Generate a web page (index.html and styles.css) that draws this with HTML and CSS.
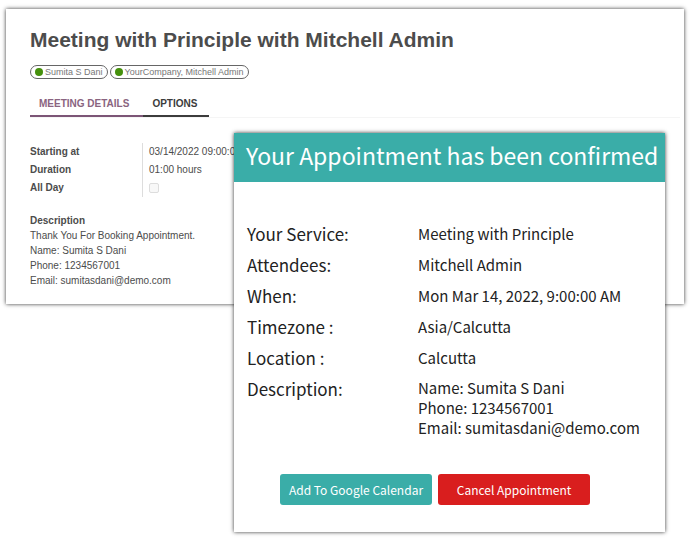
FILE: index.html
```html
<!DOCTYPE html>
<html lang="en">
<head>
    <meta charset="utf-8">
    <title>Meeting with Principle with Mitchell Admin</title>
    <link rel="stylesheet" href="styles.css">
</head>
<body>
    <main class="meeting">
        <h1>Meeting with Principle with Mitchell Admin</h1>
        <div class="attendees">
            <span class="tag"><span class="dot"></span>Sumita S Dani</span>
            <span class="tag"><span class="dot"></span>YourCompany, Mitchell Admin</span>
        </div>

        <nav class="tabs">
            <a href="#details" class="tab active">MEETING DETAILS</a>
            <a href="#options" class="tab">OPTIONS</a>
        </nav>

        <div class="fields" id="details">
            <div class="names">
                <div>Starting at</div>
                <div>Duration</div>
                <label for="all_day">All Day</label>
            </div>
            <div class="values">
                <div>03/14/2022 09:00:00</div>
                <div>01:00 hours</div>
                <div class="check"><input type="checkbox" id="all_day" disabled></div>
            </div>
        </div>

        <div class="description">
            <h2>Description</h2>
            <p>Thank You For Booking Appointment.</p>
            <p>Name: Sumita S Dani</p>
            <p>Phone: 1234567001</p>
            <p>Email: sumitasdani@demo.com</p>
        </div>
    </main>

    <section class="confirmation">
        <h2>Your Appointment has been confirmed</h2>
        <dl class="summary">
            <dt>Your Service:</dt>
            <dd>Meeting with Principle</dd>
            <dt>Attendees:</dt>
            <dd>Mitchell Admin</dd>
            <dt>When:</dt>
            <dd>Mon Mar 14, 2022, 9:00:00 AM</dd>
            <dt>Timezone :</dt>
            <dd>Asia/Calcutta</dd>
            <dt>Location :</dt>
            <dd>Calcutta</dd>
            <dt>Description:</dt>
            <dd class="lines">Name: Sumita S Dani<br>Phone: 1234567001<br>Email: sumitasdani@demo.com</dd>
        </dl>
        <div class="actions">
            <button type="button" class="add">Add To Google Calendar</button>
            <button type="button" class="cancel">Cancel Appointment</button>
        </div>
    </section>
</body>
</html>
```
FILE: styles.css
```css
* {
    box-sizing: border-box;
}
body {
    margin: 0;
    padding: 9px 6px;
    position: relative;
    min-height: 100vh;
    background-color: white;
    font-family: "Liberation Sans", Arial, sans-serif;
    font-size: 10px;
    color: #4c4c4c;
}
h1, h2, p, dl, dd {
    margin: 0;
}
.meeting {
    padding: 16px 4px 16px 24px;
    background-color: white;
    box-shadow: 0 0 4px rgba(0,0,0,0.8);
}
h1 {
    font-size: 21px;
    line-height: 30px;
}
.attendees {
    display: flex;
    gap: 2px;
    margin-top: 10px;
}
.tag {
    display: flex;
    align-items: center;
    gap: 2px;
    height: 14px;
    padding: 0 4px;
    border: 1px solid #666;
    border-radius: 7px;
    font-size: 9px;
    color: #777;
}
.dot {
    width: 8px;
    height: 8px;
    border-radius: 50%;
    background-color: #45900c;
}
.tabs {
    display: flex;
    margin-top: 14px;
    border-bottom: 1px solid #f5f5f5;
}
.tab {
    padding: 0 12px 0 9px;
    border-bottom: 2px solid #3c3c3c;
    font-size: 10px;
    font-weight: bold;
    line-height: 22px;
    color: #3c3c3c;
    text-decoration: none;
}
.tab.active {
    padding-right: 14px;
    border-color: #7c5576;
    color: #8a6480;
}
.fields {
    display: flex;
    margin-top: 25px;
    line-height: 18px;
}
.names {
    width: 113px;
    border-right: 1px solid #ddd;
    font-weight: bold;
}
.values {
    padding-left: 6px;
}
.check {
    display: flex;
    align-items: center;
    height: 18px;
}
.check input {
    appearance: none;
    width: 10px;
    height: 10px;
    margin: 0;
    border: 1px solid #ddd;
    border-radius: 2px;
    background-color: #f8f8f8;
}
.description {
    margin-top: 16px;
    line-height: 15px;
}
.description h2 {
    font-size: 10px;
}
.confirmation {
    position: absolute;
    top: 133px;
    left: 234px;
    right: 25px;
    background-color: white;
    box-shadow: 0 0 4px rgba(0,0,0,0.8);
    font-family: "Noto Sans CJK SC", sans-serif;
    color: #222;
}
.confirmation h2 {
    padding: 0 12px 5px;
    background-color: #3aada8;
    color: white;
    font-size: 23px;
    font-weight: normal;
    line-height: 44px;
    white-space: nowrap;
}
.summary {
    display: grid;
    grid-template-columns: 171px 1fr;
    padding: 36px 13px 0;
    font-size: 15px;
    line-height: 31px;
}
.summary dt {
    font-size: 17px;
}
.summary .lines {
    padding-top: 5px;
    line-height: 20px;
}
.actions {
    display: flex;
    gap: 6px;
    padding: 36px 46px 27px;
}
.actions button {
    width: 152px;
    height: 31px;
    padding: 0;
    border: none;
    border-radius: 3px;
    background-color: #3aada8;
    color: white;
    font-family: inherit;
    font-size: 12px;
    cursor: pointer;
}
.actions .cancel {
    background-color: #d91e1e;
}
```
